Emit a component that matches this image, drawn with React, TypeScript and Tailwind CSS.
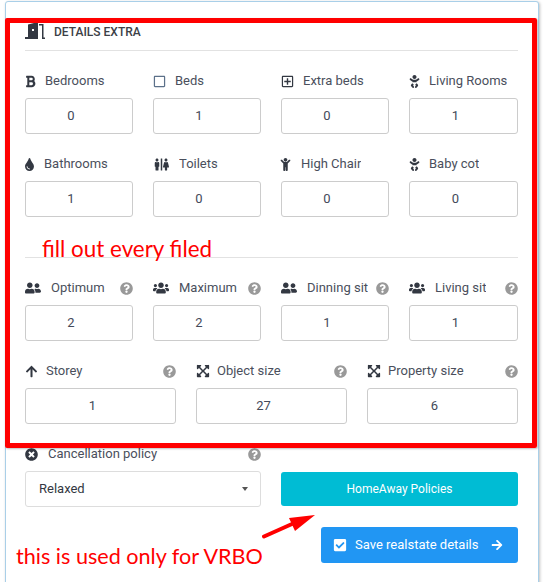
import React from "react";
import { FaBold, FaRegSquare, FaRegPlusSquare, FaBaby, FaTint, FaRestroom, FaChild, FaUserFriends, FaUsers, FaArrowUp, FaExpandArrowsAlt, FaQuestionCircle, FaTimesCircle, FaCheckSquare, FaArrowRight } from "react-icons/fa";

type F = { label: string; value: string; icon: React.ReactNode; gap: string; help?: boolean };

function Field({ label, value, icon, gap, help }: F) {
  return (
    <div className="min-w-0">
      <div className="flex h-[18px] items-center pt-0.5 text-[13px] text-[#4a4f5c]">
        <span className={"flex shrink-0 items-center text-[#333842] " + gap}>{icon}</span>
        <span className="truncate">{label}</span>
        {help && <FaQuestionCircle className="ml-auto shrink-0 text-[13px] text-[#999999]" />}
      </div>
      <div className="mt-[9px] flex h-9 items-center justify-center rounded-[3px] border border-[#cccccc] pr-4 text-[13px] text-[#444a5a]">
        {value}
      </div>
    </div>
  );
}

function Door() {
  return (
    <svg width="20" height="16" viewBox="0 0 20 16" className="text-[#333842]">
      <path fill="currentColor" d="M0 14h3V1.5L9 0h4v16H0z" />
      <rect x="7" y="6" width="2" height="2" fill="#fff" />
      <path fill="currentColor" d="M14 1h4.5v13.5H20V16h-3V2.5h-3z" />
    </svg>
  );
}

export default function App() {
  return (
    <div className="relative h-[582px] w-[548px] overflow-hidden bg-white font-['Roboto',sans-serif]">
      <div className="mx-[5px] mt-px h-[620px] w-[534px] rounded-[3px] border border-[#a9cfe8] bg-white pl-[19px] pr-[20px] pt-[18px] shadow-[1px_1px_3px_rgba(0,0,0,0.25)]">
        <div className="flex h-[30px] items-start gap-[9px] pt-[3px]">
          <Door />
          <span className="text-[12px] font-medium leading-[18px] text-[#3c4046]">DETAILS EXTRA</span>
        </div>
        <div className="h-px bg-[#e2e2e2]" />

        <div className="mt-5 grid grid-cols-[108px_108px_108px_109px] gap-x-5 gap-y-5">
          <Field label="Bedrooms" value="0" gap="mr-[8px]" icon={<FaBold className="text-[13px] -ml-[1px]" />} />
          <Field label="Beds" value="1" gap="mr-[9px]" icon={<FaRegSquare className="text-[13px] text-[#5b7089]" />} />
          <Field label="Extra beds" value="0" gap="mr-[9px]" icon={<FaRegPlusSquare className="text-[13px]" />} />
          <Field label="Living Rooms" value="1" gap="mr-[8px]" icon={<FaBaby className="-ml-[1px] text-[13px]" />} />
          <Field label="Bathrooms" value="1" gap="mr-[8px]" icon={<FaTint className="-ml-[2px] text-[13px]" />} />
          <Field label="Toilets" value="0" gap="mr-[10px]" icon={<FaRestroom className="ml-px text-[15px]" />} />
          <Field label="High Chair" value="0" gap="mr-[9px]" icon={<FaChild className="-ml-[2px] text-[13px]" />} />
          <Field label="Baby cot" value="0" gap="mr-[8px]" icon={<FaBaby className="-ml-[1px] text-[13px]" />} />
        </div>

        <div className="mt-10 h-px bg-[#e2e2e2]" />

        <div className="mt-5 grid grid-cols-[108px_108px_108px_109px] gap-x-5">
          <Field label="Optimum" value="2" help gap="mr-[10px]" icon={<FaUserFriends className="text-[16px]" />} />
          <Field label="Maximum" value="2" help gap="mr-[10px]" icon={<FaUsers className="text-[16px]" />} />
          <Field label="Dinning sit" value="1" help gap="mr-[10px]" icon={<FaUserFriends className="text-[16px]" />} />
          <Field label="Living sit" value="1" help gap="mr-[10px]" icon={<FaUsers className="text-[16px]" />} />
        </div>

        <div className="mt-5 grid grid-cols-3 gap-x-5">
          <Field label="Storey" value="1" help gap="mr-[8px]" icon={<FaArrowUp className="text-[13px]" />} />
          <Field label="Object size" value="27" help gap="mr-[7px]" icon={<FaExpandArrowsAlt className="text-[14px]" />} />
          <Field label="Property size" value="6" help gap="mr-[7px]" icon={<FaExpandArrowsAlt className="text-[14px]" />} />
        </div>

        <div className="mt-5 grid grid-cols-[236px_237px] gap-x-5">
          <div>
            <div className="flex h-[18px] items-center pt-0.5 text-[13px] text-[#4a4f5c]">
              <FaTimesCircle className="mr-[10px] text-[13px] text-[#333842]" />
              <span>Cancellation policy</span>
              <FaQuestionCircle className="ml-auto text-[13px] text-[#999999]" />
            </div>
            <div className="mt-[9px] flex h-9 items-center justify-between rounded-[3px] border border-[#dddddd] pl-[13px] pr-[12px] text-[13px] text-[#333842]">
              <span>Relaxed</span>
              <span className="h-0 w-0 border-x-[3px] border-t-[4px] border-x-transparent border-t-[#555555]" />
            </div>
          </div>
          <div className="pt-7">
            <div className="flex h-[34px] items-center justify-center rounded-[3px] bg-[#00bcd4] text-[12px] text-white">HomeAway Policies</div>
          </div>
        </div>

        <div className="mt-5 flex justify-end">
          <div className="flex h-9 w-[197px] items-center rounded-[3px] bg-[#2196f3] pl-3 text-[13px] text-white">
            <FaCheckSquare className="mr-2 text-[14px]" />
            <span>Save realstate details</span>
            <FaArrowRight className="ml-[13px] text-[12px]" />
          </div>
        </div>
      </div>

      <div className="absolute left-[5px] top-[18px] h-[430px] w-[532px] rounded-[2px] border-[5px] border-[#ff0000] shadow-[1px_1px_2px_rgba(0,0,0,0.25)]" />
      <div className="absolute left-[42px] top-[235px] font-['Lato',sans-serif] text-[22.4px] leading-[28px] text-[#ff0000]">fill out every filed</div>
      <div className="absolute left-[16px] top-[542px] font-['Lato',sans-serif] text-[21.6px] leading-[28px] text-[#ff0000]">this is used only for VRBO</div>
      <svg className="absolute left-[262px] top-[512px]" width="56" height="28" viewBox="0 0 56 28">
        <path d="M2 24.5 L30 12" stroke="#ff0000" strokeWidth="4" strokeLinecap="round" />
        <path d="M53 3 L27 6 L33 19 Z" fill="#ff0000" />
      </svg>
    </div>
  );
}
